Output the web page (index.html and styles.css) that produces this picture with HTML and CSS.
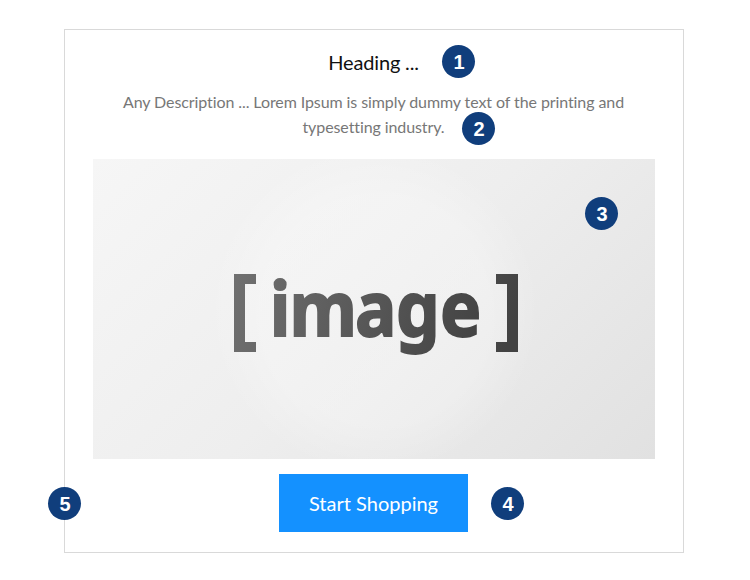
FILE: index.html
```html
<!DOCTYPE html>
<html lang="en">
<head>
<meta charset="utf-8">
<title>Banner block</title>
<link rel="stylesheet" href="styles.css">
</head>
<body>
<main class="card">
  <h1 class="heading">Heading ...</h1>
  <p class="description">Any Description ... Lorem Ipsum is simply dummy text of the printing and<br>typesetting industry.</p>
  <div class="image">
    <svg class="wordmark" viewBox="0 0 286 86">
      <defs>
        <linearGradient id="ink" gradientUnits="userSpaceOnUse" x1="0" y1="0" x2="270" y2="86">
          <stop offset="0" stop-color="#707070"/>
          <stop offset="1" stop-color="#424242"/>
        </linearGradient>
      </defs>
      <g fill="url(#ink)">
        <path d="M1 1H23V11H12V69H23V79H1Z"/>
        <text class="wordmark-text" stroke="url(#ink)" stroke-width="1.8" transform="scale(.91 1)" x="40.5 62 134 179 227.5" y="63.3">image</text>
        <path d="M285 1H263V11H274V69H263V79H285Z"/>
      </g>
    </svg>
  </div>
  <a class="button">Start Shopping</a>
  <span class="badge badge-1">1</span>
  <span class="badge badge-2">2</span>
  <span class="badge badge-3">3</span>
  <span class="badge badge-4">4</span>
  <span class="badge badge-5">5</span>
</main>
</body>
</html>
```
FILE: styles.css
```css
* { box-sizing: border-box; }
body { margin: 0; background: #fff; font-family: Lato, sans-serif; font-variant-ligatures: none; }
.card {
  position: relative;
  display: flex;
  flex-direction: column;
  align-items: center;
  width: 620px;
  height: 524px;
  margin: 29px 0 0 64px;
  padding: 19px 28px;
  border: 1px solid #d9d9d9;
}
.heading { margin: 0 1px 0 0; font-size: 20px; font-weight: 400; line-height: 26px; letter-spacing: -.15px; color: #111; }
.description { margin: 14px 1px 0 0; font-size: 16px; line-height: 25px; letter-spacing: -.09px; color: #777; text-align: center; }
.image {
  width: 562px;
  height: 300px;
  margin-top: 20px;
  padding: 114px 0 0 140px;
  background:
    radial-gradient(circle at 50% 50%, rgba(255,255,255,.25) 0, rgba(255,255,255,.25) 115px, transparent 165px),
    linear-gradient(135deg, #f6f6f6, #eee 50%, #e1e1e1);
}
.wordmark { display: block; width: 286px; height: 86px; overflow: visible; }
.wordmark-text { font: 700 76px "Noto Sans", sans-serif; }
.button {
  width: 189px;
  height: 58px;
  margin: 15px 1px 0 0;
  background: #1491ff;
  color: #fff;
  font-size: 20px;
  line-height: 59px;
  text-align: center;
}
.badge {
  position: absolute;
  width: 33px;
  height: 33px;
  padding-left: 1px;
  border-radius: 50%;
  background: #103e7c;
  color: #fff;
  font: 700 20px/34px "Liberation Sans", sans-serif;
  text-align: center;
}
.badge-1 { left: 377px; top: 15px; }
.badge-2 { left: 397px; top: 82px; }
.badge-3 { left: 520px; top: 167px; }
.badge-4 { left: 426px; top: 457px; }
.badge-5 { left: -17px; top: 457px; }
```
